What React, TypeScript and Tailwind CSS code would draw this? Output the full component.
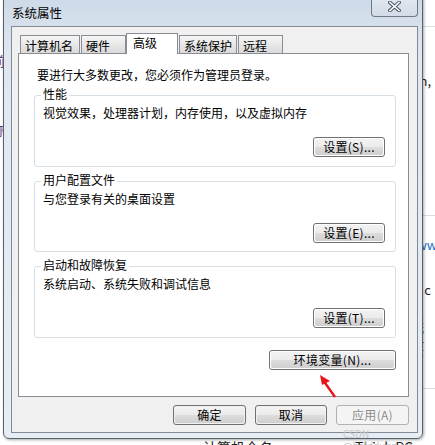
import React from "react";

const font = { fontFamily: '"Noto Sans CJK SC", "Noto Sans", sans-serif' };

function WinButton({ label, className = "", disabled = false }: { label: string; className?: string; disabled?: boolean }) {
  if (disabled) {
    return (
      <div className={`flex h-[20px] items-center justify-center rounded-[3px] border border-[#adb2b5] bg-[#f4f4f4] text-[12px] leading-none tracking-[0.3px] text-[#8c8c8c] ${className}`}>
        {label}
      </div>
    );
  }
  return (
    <div className={`rounded-[3px] border border-[#707070] p-px ${className}`}>
      <div className="flex h-[16px] items-center justify-center rounded-[2px] bg-[linear-gradient(#f2f2f2_0%,#ebebeb_50%,#dddddd_50%,#cfcfcf_100%)] text-[12px] leading-none tracking-[0.3px] text-black">
        {label}
      </div>
    </div>
  );
}

function Group({ title, text, button, h }: { title: string; text: string; button: string; h: string }) {
  return (
    <div className={`relative mt-[14px] flex flex-col rounded-[3px] border border-[#d5dfe5] ${h}`}>
      <span className="absolute left-[6px] top-[-10px] bg-white px-[2px] text-[12px] leading-[16px]">{title}</span>
      <div className="pl-[8px] pt-[9px] text-[12px] leading-[16px]">{text}</div>
      <WinButton label={button} className="mr-[10px] mt-[16px] w-[72px] self-end" />
    </div>
  );
}

const tabs = [
  { name: "计算机名", w: "w-[60px] ml-[2px]" },
  { name: "硬件", w: "w-[45px] ml-[1px]" },
  { name: "高级", w: "w-[52px]", active: true },
  { name: "系统保护", w: "w-[58px] ml-[1px]" },
  { name: "远程", w: "w-[45px] ml-[1px]" },
];

export default function App() {
  return (
    <div className="relative h-[445px] w-[435px] overflow-hidden bg-white text-black" style={font}>
      {/* page behind the dialog */}
      <div className="absolute left-[423px] top-[26px] h-px w-[20px] bg-[#dcdcdc]" />
      <div className="absolute left-[423px] top-[215px] h-px w-[20px] bg-[#dcdcdc]" />
      <div className="absolute left-[423px] top-[388px] h-px w-[20px] bg-[#dcdcdc]" />
      <span className="absolute left-[408px] top-[74px] text-[13px] leading-[14px] text-[#222]">ion,</span>
      <span className="absolute left-[406px] top-[238px] text-[13px] leading-[14px] text-[#1a6fc4]">www</span>
      <span className="absolute left-[410px] top-[261px] text-[13px] leading-[14px] text-[#5a3c8c]">上(T</span>
      <span className="absolute left-[407px] top-[283px] text-[13px] leading-[14px] text-[#222]">09 c</span>
      <span className="absolute left-[411px] top-[306px] text-[13px] leading-[14px] text-[#222]">系统</span>
      <span className="absolute left-[411px] top-[330px] text-[13px] leading-[14px] text-[#222]">显示</span>
      <span className="absolute left-[-8px] top-[54px] text-[13px] leading-[14px] text-[#5a3c8c]">前</span>
      <span className="absolute left-[-8px] top-[123px] text-[13px] leading-[14px] text-[#5a3c8c]">称</span>
      <span className="absolute left-[203px] top-[439px] text-[14px] leading-[16px] text-[#222]">计算机全名:</span>
      <span className="absolute left-[355px] top-[439px] text-[14px] leading-[16px] text-[#222]">Think PC</span>

      {/* dialog window */}
      <div className="absolute left-[3px] top-[-6px] flex h-[445px] w-[420px] flex-col rounded-[6px] border border-[#59616c] bg-[linear-gradient(#cdd9e8,#dfe7f1_60px,#e6edf5)] shadow-[1px_1px_3px_rgba(0,0,0,0.35)]">
        <div className="flex h-[31px] items-start justify-between">
          <span className="pl-[8px] pt-[10px] text-[12.5px] leading-[16px] text-black">系统属性</span>
          <div className="mr-[4px] flex h-[22px] w-[47px] items-end justify-center rounded-b-[4px] border border-t-0 border-[#6e7887] bg-[linear-gradient(#e4eaf2,#d2dbe7)] pb-[4px]">
            <svg width="13" height="11" viewBox="0 0 13 11">
              <path d="M2 1.5 L11 9.5 M11 1.5 L2 9.5" stroke="#4a5260" strokeWidth="3.6" strokeLinecap="square" />
              <path d="M2 1.5 L11 9.5 M11 1.5 L2 9.5" stroke="#ffffff" strokeWidth="1.6" strokeLinecap="square" />
            </svg>
          </div>
        </div>

        <div className="ml-[7px] mr-[4px] flex h-[407px] flex-col border border-[#838a93] bg-[#f0f0f0] pb-[7px] pl-[6px] pr-[8px] pt-[6px]">
          <div className="relative z-10 flex h-[20px] items-end">
            {tabs.map((t) =>
              t.active ? (
                <div key={t.name} className={`mb-[-1px] h-[21px] border border-b-0 border-[#898c95] bg-white pl-[6px] pt-[1px] text-[12px] leading-[16px] ${t.w}`}>
                  {t.name}
                </div>
              ) : (
                <div key={t.name} className={`h-[18px] border border-b-0 border-[#898c95] bg-[linear-gradient(#f5f5f5,#e8e8e8_50%,#dadada)] pl-[4px] pt-[2px] text-[12px] leading-[16px] ${t.w}`}>
                  {t.name}
                </div>
              )
            )}
          </div>

          <div className="flex h-[344px] flex-col border border-[#898c95] bg-white pl-[15px] pr-[12px] pt-[13px]">
            <div className="ml-[3px] text-[12px] leading-[16px]">要进行大多数更改，您必须作为管理员登录。</div>
            <div className="-mt-[2px]">
              <Group title="性能" text="视觉效果，处理器计划，内存使用，以及虚拟内存" button="设置(S)..." h="h-[72px]" />
            </div>
            <Group title="用户配置文件" text="与您登录有关的桌面设置" button="设置(E)..." h="h-[71px]" />
            <Group title="启动和故障恢复" text="系统启动、系统失败和调试信息" button="设置(T)..." h="h-[72px]" />
            <WinButton label="环境变量(N)..." className="mt-[12px] w-[127px] self-end" />
          </div>

          <div className="mt-[8px] flex justify-end gap-[9px]">
            <WinButton label="确定" className="w-[73px]" />
            <WinButton label="取消" className="w-[72px]" />
            <WinButton label="应用(A)" className="w-[73px]" disabled />
          </div>
        </div>
      </div>

      {/* red annotation arrow */}
      <svg className="absolute left-0 top-0" width="435" height="445">
        <line x1="335" y1="397" x2="323" y2="380" stroke="#e8141a" strokeWidth="2.4" />
        <polygon points="320,375 330,381 322,385" fill="#e8141a" />
      </svg>

      <span className="absolute left-[343px] top-[428px] text-[10px] leading-[12px] text-[#c8c8c8]">CSDN @baldduppy.ir</span>
    </div>
  );
}
